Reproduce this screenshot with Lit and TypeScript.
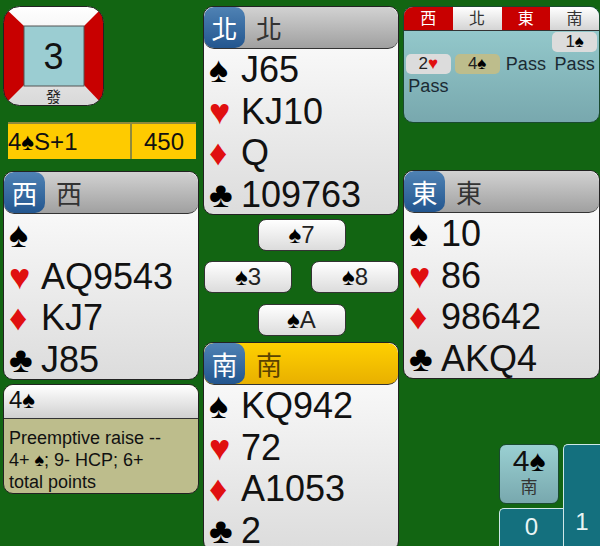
import { LitElement, html, css } from "lit";
import { customElement } from "lit/decorators.js";

const suit = (s: string) =>
  html`<span class=${s === "♥" || s === "♦" ? "red" : "blk"}>${s}</span>`;

@customElement("app-root")
export class AppRoot extends LitElement {
  static styles = css`
    :host {
      display: block;
      width: 600px;
      height: 546px;
      overflow: hidden;
      position: relative;
      background: #126512;
      font-family: "Liberation Sans", "Noto Sans CJK TC", sans-serif;
      color: #111;
    }
    .page {
      display: grid;
      grid-template-columns: 196px 196px 197px;
      column-gap: 4px;
      padding: 6px 0 0 3px;
      box-sizing: border-box;
      height: 546px;
    }
    .col {
      display: flex;
      flex-direction: column;
      align-items: stretch;
    }
    .red { color: #e01010; }
    .blk { color: #000; }

    .vul {
      position: relative;
      width: 101px;
      height: 100px;
      display: flex;
      flex-direction: column;
      align-items: center;
    }
    .vul svg { position: absolute; inset: 0; }
    .vul .num {
      position: relative;
      margin-top: 22px;
      height: 60px;
      line-height: 58px;
      font-size: 36px;
    }
    .vul .dealer {
      position: relative;
      margin-top: 0px;
      font-size: 15px;
      line-height: 17px;
      color: #222;
    }
    .contract {
      display: flex;
      margin: 16px 3px 0 5px;
      height: 37px;
      background: #fecb00;
      border-top: 2px solid #8f8a3c;
      box-sizing: border-box;
      font-size: 24px;
      line-height: 35px;
    }
    .contract .c1 { width: 122px; border-right: 2px solid #8f8a3c; white-space: nowrap; }
    .contract .c2 { flex: 1; text-align: center; }

    .hand {
      height: 209px;
      border-radius: 10px;
      border: 1px solid #222;
      box-sizing: border-box;
      background: linear-gradient(#fff, #dcdcdc);
      overflow: hidden;
    }
    .head {
      height: 42px;
      display: flex;
      align-items: center;
      background: linear-gradient(#d2d2d2, #a0a0a0);
      border-radius: 10px;
      border-bottom: 1px solid #333;
      box-sizing: border-box;
      color: #333;
      font-size: 26px;
    }
    .head.active { background: linear-gradient(#ffd000, #e8b000); color: #5a4300; }
    .seat {
      width: 41px;
      height: 41px;
      border-radius: 10px;
      background: linear-gradient(#4f82b4, #23568f);
      color: #fff;
      font-size: 26px;
      display: flex;
      align-items: center;
      justify-content: center;
      margin-right: 11px;
      flex: none;
    }
    .row {
      height: 41.5px;
      line-height: 41px;
      font-size: 36px;
      white-space: nowrap;
      padding-left: 5px;
      display: flex;
    }
    .row .s { width: 32px; flex: none; font-size: 36px; }

    .west { margin-top: 12px; }
    .info {
      margin-top: 4px;
      height: 110px;
      border: 1px solid #222;
      border-radius: 10px;
      background: #bdbd8c;
      box-sizing: border-box;
      overflow: hidden;
      font-size: 18px;
      line-height: 22px;
    }
    .info .t {
      height: 33px;
      background: linear-gradient(#fff, #d0d0d0);
      border-bottom: 1px solid #333;
      font-size: 24px;
      line-height: 30px;
      padding-left: 5px;
    }
    .info .b { padding: 8px 5px; }

    .trick { height: 119px; display: grid; grid-template-columns: 1fr 1fr; column-gap: 19px; row-gap: 8px; margin: 4px 0; padding-left: 1px; }
    .tc {
      height: 32px;
      width: 88px;
      border: 1px solid #333;
      border-radius: 8px;
      box-sizing: border-box;
      background: linear-gradient(#fff, #dcdcdc);
      text-align: center;
      font-size: 24px;
      line-height: 30px;
      color: #222;
    }
    .tc.mid { grid-column: 1 / 3; justify-self: center; }

    .auction {
      height: 117px;
      border-radius: 10px;
      border: 1px solid #1a4a30;
      box-sizing: border-box;
      background: linear-gradient(#9ad0d2, #78a8ae);
      overflow: hidden;
      font-size: 18px;
      color: #1b2a33;
    }
    .ahead { display: grid; grid-template-columns: repeat(4, 1fr); height: 23px; border-bottom: 1px solid #333; }
    .ahead div { text-align: center; font-size: 16px; line-height: 23px; }
    .ahead .v { background: #c80000; color: #fff; }
    .ahead .n { background: linear-gradient(#fff, #d4d4d4); color: #333; }
    .bids { display: grid; grid-template-columns: repeat(4, 48.75px); align-items: center; grid-auto-rows: 22px; row-gap: 0; }
    .bid { text-align: center; line-height: 22px; height: 22px; }
    .chip { margin: 1px 2px; height: 20px; line-height: 20px; border-radius: 5px; background: #dcdcdc; text-align: center; color: #222; font-size: 17px; }
    .chip.hl { background: #bdbd8c; }

    .east { margin-top: 47px; }
    .corner { position: absolute; left: 499px; top: 444px; width: 101px; height: 102px; }
    .lastbid {
      position: absolute; left: 0; top: 0;
      width: 60px; height: 60px; border-radius: 7px;
      background: linear-gradient(#9ad0d2, #78a8ae);
      border: 1px solid #1a4a30; box-sizing: border-box;
      text-align: center; font-size: 30px; line-height: 32px;
    }
    .lastbid small { display: block; font-size: 17px; line-height: 22px; color: #333; }
    .tk {
      position: absolute;
      background: #14707e;
      border: 1px solid #cfe8e8;
      border-bottom: none;
      border-right: none;
      border-radius: 5px 0 0 0;
      color: #e8f5f5;
      font-size: 24px;
      box-sizing: border-box;
      text-align: center;
    }
    .tk.a { left: 0; top: 64px; width: 64px; height: 38px; line-height: 36px; }
    .tk.b { left: 64px; top: 0; width: 37px; height: 102px; line-height: 154px; }
  `;

  hand(seat: string, active: boolean, rows: string[], cls = "") {
    const suits = ["♠", "♥", "♦", "♣"];
    return html`<div class="hand ${cls}">
      <div class="head ${active ? "active" : ""}"><div class="seat">${seat}</div>${seat}</div>
      ${rows.map((r, i) => html`<div class="row"><span class="s">${suit(suits[i])}</span><span>${r}</span></div>`)}
    </div>`;
  }

  render() {
    return html`<div class="page">
      <div class="col">
        <div class="vul">
          <svg width="101" height="100" viewBox="0 0 101 100">
            <defs>
              <linearGradient id="w" x1="0" y1="0" x2="0" y2="1"><stop offset="0" stop-color="#fff"/><stop offset="1" stop-color="#d8d8d8"/></linearGradient>
              <clipPath id="r"><rect x="0.5" y="0.5" width="100" height="99" rx="16"/></clipPath>
            </defs>
            <g clip-path="url(#r)">
              <rect width="101" height="100" fill="url(#w)"/>
              <polygon points="0,0 21,20 21,79 0,100" fill="#c80000"/>
              <polygon points="101,0 81,20 81,79 101,100" fill="#c80000"/>
              <rect x="21" y="20" width="60" height="60" fill="#9bcdd2" stroke="#555"/>
            </g>
            <rect x="0.5" y="0.5" width="100" height="99" rx="16" fill="none" stroke="#222"/>
          </svg>
          <div class="num">3</div>
          <div class="dealer">發</div>
        </div>
        <div class="contract">
          <div class="c1">4${suit("♠")}S+1</div>
          <div class="c2">450</div>
        </div>
        ${this.hand("西", false, ["", "AQ9543", "KJ7", "J85"], "west")}
        <div class="info">
          <div class="t">4${suit("♠")}</div>
          <div class="b">Preemptive raise --<br />4+ ${suit("♠")}; 9- HCP; 6+<br />total points</div>
        </div>
      </div>
      <div class="col">
        ${this.hand("北", false, ["J65", "KJ10", "Q", "109763"])}
        <div class="trick">
          <div class="tc mid">${suit("♠")}7</div>
          <div class="tc">${suit("♠")}3</div>
          <div class="tc">${suit("♠")}8</div>
          <div class="tc mid">${suit("♠")}A</div>
        </div>
        ${this.hand("南", true, ["KQ942", "72", "A1053", "2"])}
      </div>
      <div class="col">
        <div class="auction">
          <div class="ahead">
            <div class="v">西</div><div class="n">北</div><div class="v">東</div><div class="n">南</div>
          </div>
          <div class="bids">
            <div></div><div></div><div></div><div class="chip">1${suit("♠")}</div>
            <div class="chip">2${suit("♥")}</div><div class="chip hl">4${suit("♠")}</div><div class="bid">Pass</div><div class="bid">Pass</div>
            <div class="bid">Pass</div>
          </div>
        </div>
        ${this.hand("東", false, ["10", "86", "98642", "AKQ4"], "east")}
      </div>
    </div>
    <div class="corner">
      <div class="lastbid">4${suit("♠")}<small>南</small></div>
      <div class="tk a">0</div>
      <div class="tk b">1</div>
    </div>`;
  }
}
